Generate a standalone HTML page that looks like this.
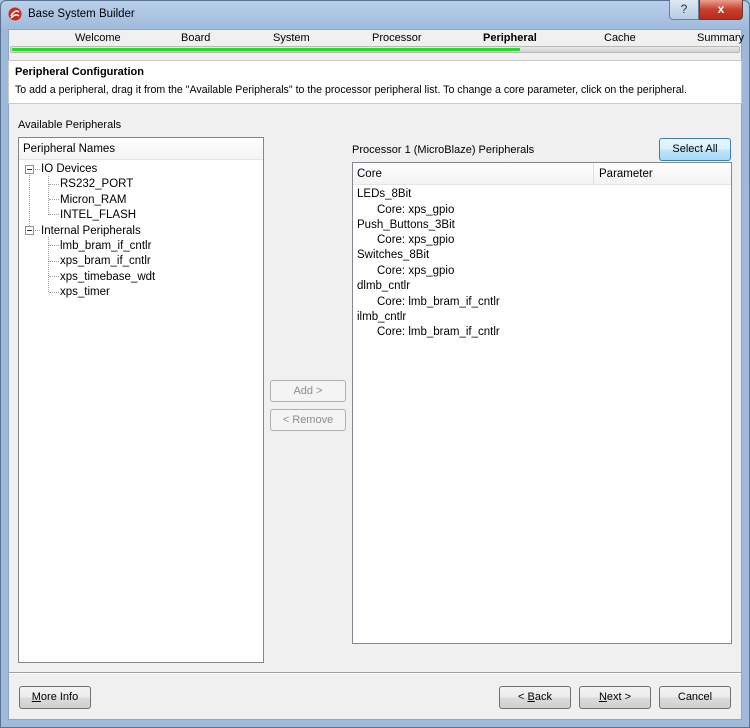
<!DOCTYPE html><html><head><style>
*{box-sizing:border-box}body{margin:0;width:750px;height:728px;overflow:hidden;font-family:"Liberation Sans",sans-serif;font-size:11px;color:#000;background:#a9c3df}
.a{position:absolute}
.win{position:absolute;left:0;top:0;width:750px;height:728px;border-radius:6px 6px 0 0;background:linear-gradient(#b9d0ea,#9db9da 30px,#9fbadb);border:1px solid #5a7190}
.content{left:8px;top:29px;width:734px;height:691px;background:#f0f0f0;border:1px solid #8ea4c0}
.btn{position:absolute;border:1px solid #707070;border-radius:3px;background:linear-gradient(#f2f2f2,#ebebeb 50%,#dddddd 51%,#cfcfcf);text-align:center;line-height:21px;font-size:11px}
.box{position:absolute;background:#fff;border:1px solid #828790}
.hdr{position:absolute;left:0;top:0;right:0;height:22px;background:linear-gradient(#fff,#f3f3f3);border-bottom:1px solid #e5e5e5;padding-left:4px;line-height:22px;font-size:11.5px}
.t{position:absolute;white-space:nowrap}
.tr{font-size:11.5px}
.dot{position:absolute;border-left:1px dotted #a0a0a0}
.hd{position:absolute;border-top:1px dotted #a0a0a0;width:10px}
</style></head><body>
<div class="win"></div>
<svg class="a" style="left:8px;top:7px" width="14" height="14"><circle cx="7" cy="7" r="6.5" fill="#c8281e"/><path d="M3 9 Q7 2 11 5 M3 11 Q8 6 11 9" stroke="#fff" stroke-width="1.6" fill="none"/></svg>
<div class="t" style="left:28px;top:8px;font-size:11.5px">Base System Builder</div>
<div class="a" style="left:669px;top:0;width:30px;height:20px;border:1px solid #6a7e98;border-top:none;border-radius:0 0 0 4px;background:linear-gradient(#dde8f4,#b8cce4);text-align:center;font-size:12px;line-height:19px;color:#333">?</div>
<div class="a" style="left:699px;top:0;width:44px;height:20px;border:1px solid #6a3a30;border-top:none;border-radius:0 0 4px 0;background:linear-gradient(#e8a090,#c8402c 50%,#b82a18);text-align:center;color:#fff;font-weight:bold;font-size:12px;line-height:19px">x</div>
<div class="a content"></div>
<div class="t" style="left:75px;top:32px">Welcome</div>
<div class="t" style="left:181px;top:32px">Board</div>
<div class="t" style="left:273px;top:32px">System</div>
<div class="t" style="left:372px;top:32px">Processor</div>
<div class="t" style="left:483px;top:32px;font-weight:bold">Peripheral</div>
<div class="t" style="left:604px;top:32px">Cache</div>
<div class="t" style="left:697px;top:32px">Summary</div>
<div class="a" style="left:10px;top:46px;width:730px;height:7px;border:1px solid #b8b8b8;border-radius:2px;background:linear-gradient(#e8e8e8,#d4d4d4)"></div>
<div class="a" style="left:12px;top:48px;width:508px;height:3px;background:#28d828"></div>
<div class="a" style="left:8px;top:60px;width:734px;height:44px;background:#fff;border:1px solid #c8c8c8"></div>
<div class="t" style="left:15px;top:66px;font-weight:bold">Peripheral Configuration</div>
<div class="t" style="left:15px;top:84px;font-size:10.6px">To add a peripheral, drag it from the "Available Peripherals" to the processor peripheral list. To change a core parameter, click on the peripheral.</div>
<div class="t" style="left:18px;top:119px">Available Peripherals</div>
<div class="box" style="left:18px;top:137px;width:246px;height:526px"><div class="hdr">Peripheral Names</div></div>
<div class="a" style="left:25px;top:165px;width:9px;height:9px;border:1px solid #919191;background:#fff"></div><div class="a" style="left:27px;top:169px;width:5px;height:1px;background:#333"></div>
<div class="a" style="left:25px;top:226px;width:9px;height:9px;border:1px solid #919191;background:#fff"></div><div class="a" style="left:27px;top:230px;width:5px;height:1px;background:#333"></div>
<div class="dot" style="left:29px;top:175px;height:51px"></div>
<div class="dot" style="left:48px;top:176px;height:39px"></div>
<div class="dot" style="left:48px;top:237px;height:55px"></div>
<div class="hd" style="left:49px;top:184px"></div><div class="hd" style="left:49px;top:199px"></div><div class="hd" style="left:49px;top:214px"></div>
<div class="hd" style="left:49px;top:245px"></div><div class="hd" style="left:49px;top:261px"></div><div class="hd" style="left:49px;top:276px"></div><div class="hd" style="left:49px;top:292px"></div>
<div class="hd" style="left:35px;top:169px;width:5px"></div><div class="hd" style="left:35px;top:230px;width:5px"></div>
<div class="t tr" style="left:41px;top:163px">IO Devices</div>
<div class="t tr" style="left:60px;top:178px">RS232_PORT</div>
<div class="t tr" style="left:60px;top:194px">Micron_RAM</div>
<div class="t tr" style="left:60px;top:209px">INTEL_FLASH</div>
<div class="t tr" style="left:41px;top:225px">Internal Peripherals</div>
<div class="t tr" style="left:60px;top:240px">lmb_bram_if_cntlr</div>
<div class="t tr" style="left:60px;top:255px">xps_bram_if_cntlr</div>
<div class="t tr" style="left:60px;top:271px">xps_timebase_wdt</div>
<div class="t tr" style="left:60px;top:286px">xps_timer</div>
<div class="t" style="left:352px;top:144px">Processor 1 (MicroBlaze) Peripherals</div>
<div class="btn" style="left:659px;top:138px;width:72px;height:23px;border-color:#3c7fb1;background:linear-gradient(#eaf6fd,#d9f0fc 50%,#bee6fd 51%,#a7d9f5)">Select All</div>
<div class="box" style="left:352px;top:162px;width:380px;height:482px"><div class="hdr">Core</div><div class="a" style="left:240px;top:0;height:22px;border-left:1px solid #e0e0e0;padding-left:5px;line-height:22px;font-size:11.5px">Parameter</div></div>
<div class="t tr" style="left:357px;top:188px">LEDs_8Bit</div>
<div class="t tr" style="left:377px;top:204px">Core: xps_gpio</div>
<div class="t tr" style="left:357px;top:219px">Push_Buttons_3Bit</div>
<div class="t tr" style="left:377px;top:234px">Core: xps_gpio</div>
<div class="t tr" style="left:357px;top:249px">Switches_8Bit</div>
<div class="t tr" style="left:377px;top:265px">Core: xps_gpio</div>
<div class="t tr" style="left:357px;top:280px">dlmb_cntlr</div>
<div class="t tr" style="left:377px;top:296px">Core: lmb_bram_if_cntlr</div>
<div class="t tr" style="left:357px;top:311px">ilmb_cntlr</div>
<div class="t tr" style="left:377px;top:326px">Core: lmb_bram_if_cntlr</div>
<div class="btn" style="left:270px;top:380px;width:76px;height:22px;color:#8d8d8d;border-color:#adb2b5;background:#f4f4f4;line-height:20px">Add &gt;</div>
<div class="btn" style="left:270px;top:409px;width:76px;height:22px;color:#8d8d8d;border-color:#adb2b5;background:#f4f4f4;line-height:20px">&lt; Remove</div>
<div class="a" style="left:9px;top:672px;width:732px;height:2px;border-top:1px solid #a0a0a0;border-bottom:1px solid #fff"></div>
<div class="btn" style="left:19px;top:686px;width:72px;height:23px"><u>M</u>ore Info</div>
<div class="btn" style="left:499px;top:686px;width:72px;height:23px">&lt; <u>B</u>ack</div>
<div class="btn" style="left:579px;top:686px;width:72px;height:23px"><u>N</u>ext &gt;</div>
<div class="btn" style="left:659px;top:686px;width:72px;height:23px">Cancel</div>
</body></html>
